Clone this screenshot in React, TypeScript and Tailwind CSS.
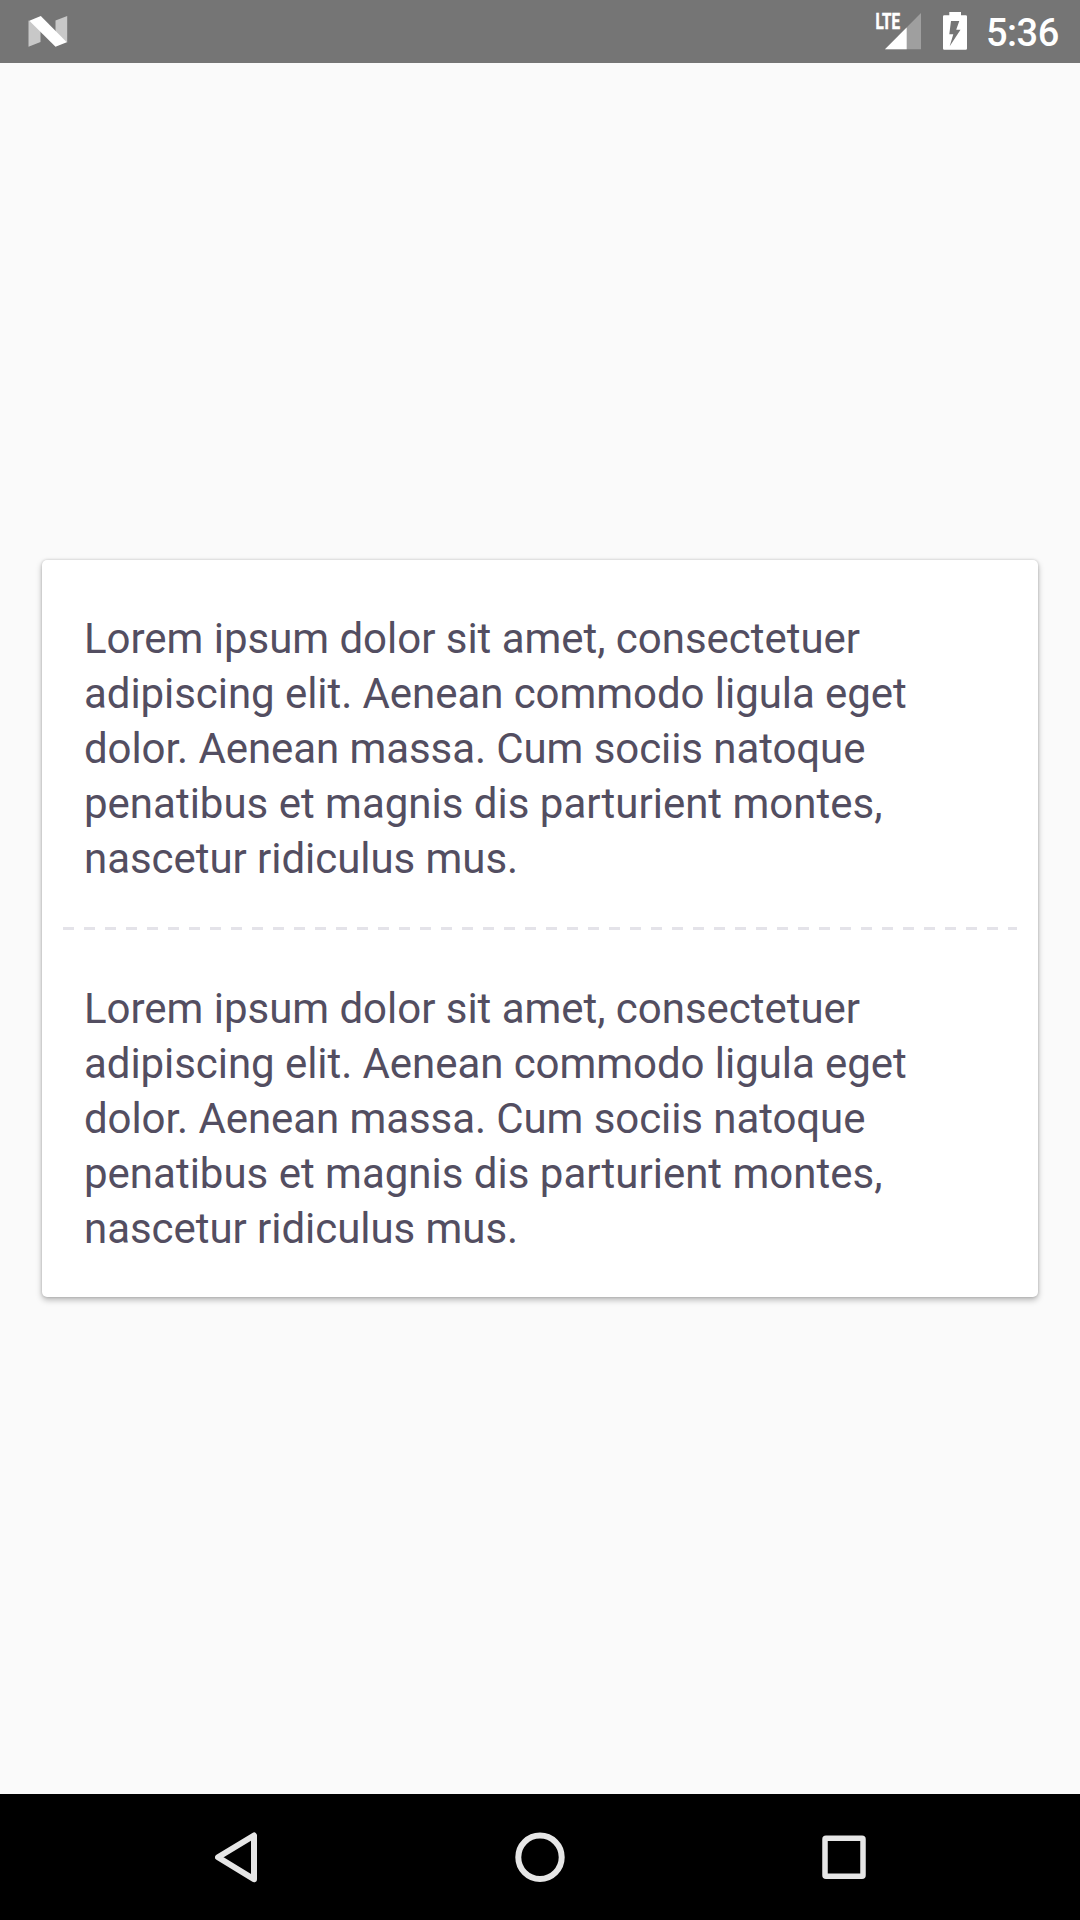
const copy = [
  { text: 'Lorem ipsum dolor sit amet, consectetuer', tracking: 'tracking-[-0.03px]' },
  { text: 'adipiscing elit. Aenean commodo ligula eget', tracking: 'tracking-[-0.06px]' },
  { text: 'dolor. Aenean massa. Cum sociis natoque', tracking: 'tracking-[-0.08px]' },
  { text: 'penatibus et magnis dis parturient montes,', tracking: 'tracking-normal' },
  { text: 'nascetur ridiculus mus.', tracking: 'tracking-[-0.05px]' },
];

function Paragraph() {
  return (
    <p className="px-[42px] text-[42px] leading-[55px] text-[#534e61]">
      {copy.map(({ text, tracking }) => (
        <span key={text} className={`block whitespace-nowrap ${tracking}`}>{text}</span>
      ))}
    </p>
  );
}

function StatusBar() {
  return (
    <header className="flex h-[63px] items-center bg-[#757575] text-white">
      <svg className="ml-[28px]" width="40" height="63" viewBox="-0.5 0 40 63">
        <path d="M0 20.5L12 25V42L0 46.8ZM27 20.5L38.7 16V42.5L27 37Z" fill="#c8c8c8" />
        <path d="M0.8 20.7L12.3 16L38.3 42.3L27 46.8Z" fill="#fff" />
      </svg>
      <svg className="ml-auto" width="46" height="63" viewBox="0 0 46 63">
        <path d="M10 49.3L46 13V49.3Z" fill="#9f9f9f" />
        <path d="M10 49.3L31.7 27.4V49.3Z" fill="#fff" />
        <text x="0.5" y="29.3" fontSize="22.5" fontWeight="700" textLength="24.5" lengthAdjust="spacingAndGlyphs" fill="#fff" stroke="#fff" strokeWidth="0.6">LTE</text>
      </svg>
      <svg className="ml-[22px]" width="24" height="63" viewBox="0 0 24 63">
        <path fillRule="evenodd" d="M6.3 12H18V15.3H22.7Q24 15.3 24 16.6V48.4Q24 49.7 22.7 49.7H1.3Q0 49.7 0 48.4V16.6Q0 15.3 1.3 15.3H6.3ZM8 21L6.3 34.3H10.3L6.7 46.2L17.5 29.7H13.2L16.3 21Z" fill="#fff" />
      </svg>
      <span className="ml-[19px] mr-[21px] w-[73px] whitespace-nowrap pt-[3px] text-[38px] font-medium leading-[60px] tracking-[-0.5px]">5:36</span>
    </header>
  );
}

export default function App() {
  return (
    <div className="flex h-[1920px] w-[1080px] flex-col bg-[#fafafa] font-['Roboto',sans-serif]">
      <StatusBar />
      <main className="flex flex-1 flex-col px-[42px] pt-[497px]">
        <section className="h-[737px] rounded-[5px] bg-white pt-[51px] shadow-[0_3px_6px_rgba(0,0,0,0.27),0_0_3px_rgba(0,0,0,0.18)]">
          <Paragraph />
          <div className="flex h-[95px] px-[21px] pt-[41px]">
            <div className="h-[3px] w-full bg-[repeating-linear-gradient(to_right,#e4e3e9_0_11px,transparent_11px_21px)]" />
          </div>
          <Paragraph />
        </section>
      </main>
      <nav className="flex h-[126px] items-center bg-black">
        <svg className="ml-[215px]" width="42" height="126" viewBox="215 0 42 126" fill="none" stroke="#e6e6e6" strokeWidth="6" strokeLinejoin="round">
          <path d="M218 63.3L254 41.5V85.2Z" />
        </svg>
        <svg className="ml-[258px]" width="50" height="126" viewBox="515 0 50 126" fill="none" stroke="#e6e6e6" strokeWidth="6">
          <circle cx="540" cy="63.3" r="21.7" />
        </svg>
        <svg className="ml-[255px]" width="48" height="126" viewBox="820 0 48 126" fill="none" stroke="#e6e6e6" strokeWidth="5.5" strokeLinejoin="round">
          <rect x="825" y="44.2" width="38" height="38" rx="1" />
        </svg>
      </nav>
    </div>
  );
}
